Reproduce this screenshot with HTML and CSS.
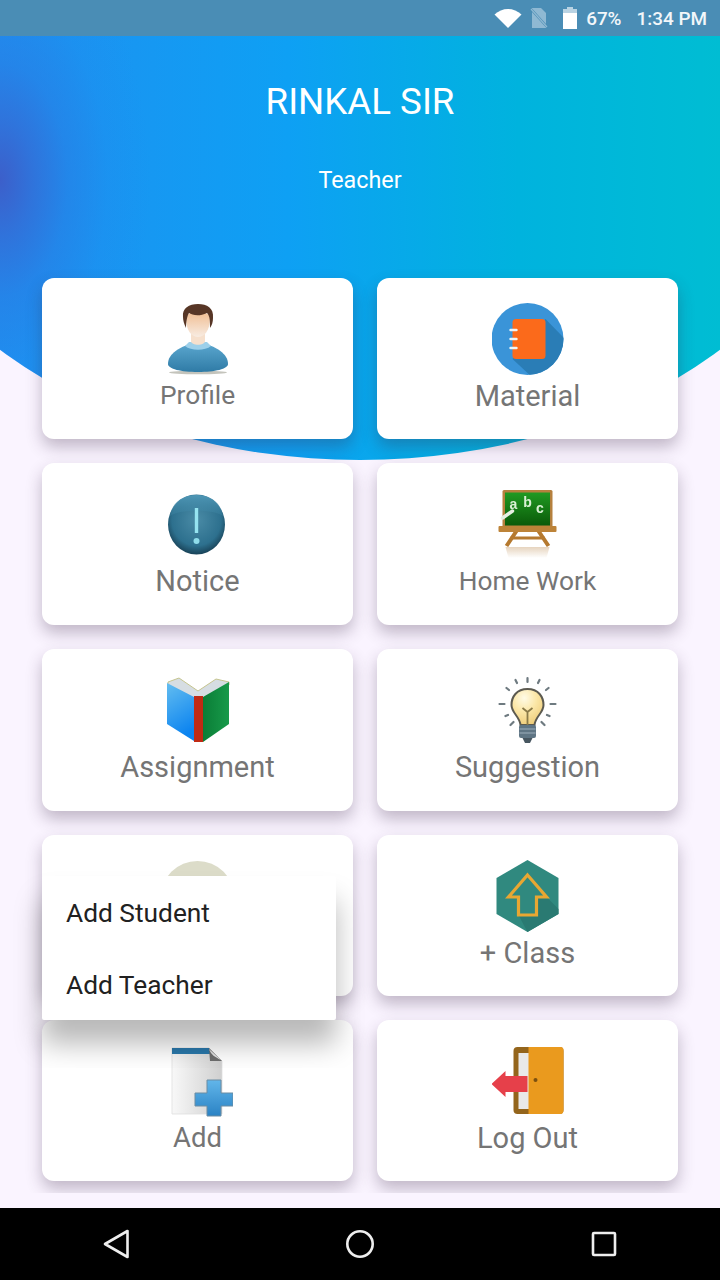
FILE: index.html
```html
<!DOCTYPE html>
<html lang="en">
<head>
<meta charset="utf-8">
<title>Teacher Dashboard</title>
<link rel="stylesheet" href="styles.css">
</head>
<body>
<div class="phone">
  <header class="status">
    <svg class="st-wifi" width="28" height="20" viewBox="0 0 28 20"><path d="M0.500 6.500C8-1 20-1 27.500 6.500L14 20Z" fill="#fff"/></svg>
    <svg class="st-sim" width="20" height="22" viewBox="0 0 20 22"><path d="M3 1h9l5 5v15H3z" fill="#8fb9d3"/><path d="M1 1l18 20" stroke="#4a8db5" stroke-width="2.500"/><path d="M2 2l16 18" stroke="#8fb9d3" stroke-width="1.200"/></svg>
    <svg class="st-bat" width="14" height="22" viewBox="0 0 14 22"><path d="M4 0h6v2h4v20H0V2h4z" fill="#b9d3e3"/><rect y="6" width="14" height="16" fill="#fff"/></svg>
    <span class="st-pct">67%</span>
    <span class="st-time">1:34 PM</span>
  </header>

  <main class="screen">
    <section class="hero">
      <h1 class="hero-name">RINKAL SIR</h1>
      <p class="hero-role">Teacher</p>
    </section>

    <div class="grid-clip">
      <div class="grid">
        <a class="card">
          <span class="icon-box">
            <svg width="62" height="72" viewBox="166 303 62 72">
              <defs>
                <linearGradient id="pf-skin" x1="0" y1="0" x2="0" y2="1"><stop offset="0" stop-color="#f0bd92"/><stop offset="1" stop-color="#f8ece2"/></linearGradient>
                <linearGradient id="pf-body" x1="0" y1="0" x2="0" y2="1"><stop offset="0" stop-color="#5aa6ce"/><stop offset="1" stop-color="#2f7ba6"/></linearGradient>
              </defs>
              <ellipse cx="197" cy="372.500" rx="29" ry="1.800" fill="#c4c4bc"/>
              <path d="M167 364C167 353 180 347 189 344L205 344C214 347 227 353 227 364C227 369 214 372 197 372S167 369 167 364Z" fill="url(#pf-body)"/>
              <path d="M184 346C190 351 204 351 210 346L206 342H188Z" fill="#9dd0ea"/>
              <path d="M190 328H204V341C204 346 190 346 190 341Z" fill="#f6e0cd"/>
              <path d="M185 318C185 310 209 310 209 318C209 331 203 337 197 337S185 331 185 318Z" fill="url(#pf-skin)"/>
              <path d="M182 317C181 308 188 304 197 304S213 308 212 318C212 322 211 325 209 328C209 321 209 316 206 313C198 317 191 315 188 313C186 316 185 322 185 328C183 324 182 320 182 317Z" fill="#573626"/>
            </svg>
          </span>
          <span class="label label-sm label-up">Profile</span>
        </a>
        <a class="card">
          <span class="icon-box">
            <svg width="72" height="72" viewBox="491.500 303 72 72">
              <defs><clipPath id="mt-clip"><circle cx="527" cy="339" r="36"/></clipPath></defs>
              <circle cx="527" cy="339" r="36" fill="#3a94d8"/>
              <path d="M545 319L575 350L540 385L512 359Z" fill="#2a7db6" clip-path="url(#mt-clip)"/>
              <rect x="512" y="319" width="33" height="40" rx="3.500" fill="#fb6a1b"/>
              <g stroke="#eef4f8" stroke-width="2.400" stroke-linecap="round"><path d="M510 330h6M510 339h6M510 348h6"/></g>
            </svg>
          </span>
          <span class="label">Material</span>
        </a>
        <a class="card">
          <span class="icon-box">
            <svg width="60" height="62" viewBox="168 493 60 62">
              <defs>
                <radialGradient id="nt-ball" cx=".5" cy=".42" r=".6"><stop offset="0" stop-color="#4a8ba6"/><stop offset=".72" stop-color="#2d708e"/><stop offset="1" stop-color="#163c50"/></radialGradient>
                <linearGradient id="nt-shine" x1="0" y1="0" x2="0" y2="1"><stop offset="0" stop-color="#4f97b6"/><stop offset="1" stop-color="#3b819f" stop-opacity=".4"/></linearGradient>
              </defs>
              <ellipse cx="196.500" cy="524.500" rx="28.500" ry="30" fill="url(#nt-ball)"/>
              <path d="M170 516C172 502 183 495 196.500 495S221 502 223 516C214 509 179 509 170 516Z" fill="url(#nt-shine)"/>
              <path d="M194.800 508h3.400v25h-3.400z" fill="#96e3f0"/>
              <circle cx="196.500" cy="541" r="3" fill="#8fdcea"/>
            </svg>
          </span>
          <span class="label">Notice</span>
        </a>
        <a class="card">
          <span class="icon-box">
            <svg width="60" height="70" viewBox="497.500 489 60 70">
              <defs><linearGradient id="hw-board" x1="0" y1="0" x2="0" y2="1"><stop offset="0" stop-color="#1f9a22"/><stop offset="1" stop-color="#0b5a09"/></linearGradient>
              <linearGradient id="hw-reflect" x1="0" y1="0" x2="0" y2="1"><stop offset="0" stop-color="#c8a070" stop-opacity=".45"/><stop offset="1" stop-color="#c8a070" stop-opacity="0"/></linearGradient></defs>
              <path d="M505 547H549L546 558H508Z" fill="url(#hw-reflect)"/>
              <g stroke="#b5792f" stroke-width="4"><path d="M516 531L506 546M538 531L548 546"/><path d="M510 538H544" stroke-width="3"/></g>
              <rect x="502" y="490" width="50" height="37" rx="1.500" fill="#b5803e"/>
              <rect x="504.500" y="492.500" width="45" height="33" fill="url(#hw-board)"/>
              <rect x="498" y="526" width="58" height="6" rx="1" fill="#bd8338"/>
              <path d="M502 518L512 511" stroke="#e6efe2" stroke-width="3.500" stroke-linecap="round"/>
              <text class="chalk" x="513" y="509">a</text><text class="chalk" x="527" y="507">b</text><text class="chalk" x="539.500" y="513">c</text>
            </svg>
          </span>
          <span class="label label-sm">Home Work</span>
        </a>
        <a class="card">
          <span class="icon-box">
            <svg width="64" height="66" viewBox="165 678 64 66">
              <defs><linearGradient id="as-blue" x1="0" y1="0" x2=".3" y2="1"><stop offset="0" stop-color="#63bdf0"/><stop offset="1" stop-color="#0c84f0"/></linearGradient>
              <linearGradient id="as-green" x1="0" y1="0" x2="1" y2="0"><stop offset="0" stop-color="#0a7d36"/><stop offset="1" stop-color="#189a4a"/></linearGradient></defs>
              <path d="M167 683L178 679L197 692L215 680L228 683V686L202 699H193L167 686Z" fill="#d6dde2" stroke="#c5c48e" stroke-width="1"/>
              <path d="M166 684L193 698V742L166 725Z" fill="url(#as-blue)"/>
              <path d="M193 697H202V743H193Z" fill="#c02a14"/>
              <path d="M202 698L228 683V725L202 743Z" fill="url(#as-green)"/>
            </svg>
          </span>
          <span class="label">Assignment</span>
        </a>
        <a class="card">
          <span class="icon-box">
            <svg width="60" height="68" viewBox="497.500 676 60 68">
              <defs><radialGradient id="sg-bulb" cx=".4" cy=".25" r=".75"><stop offset="0" stop-color="#fffbe6"/><stop offset=".5" stop-color="#fbe7a8"/><stop offset="1" stop-color="#efce7c"/></radialGradient></defs>
              <g stroke="#6e7a80" stroke-width="2.200" stroke-linecap="round"><path d="M527 678v4M515 680l1.500 3M539 680l-1.500 3M506 688l2.500 2M548 688l-2.500 2M499 704h5M550 704h5M505 716l2.500-1M549 716l-2.500-1M510 725l3-3M544 725l-3-3"/></g>
              <path d="M527 689C516 689 511 697 511 705C511 713 519 716 520 725H534C535 716 543 713 543 705C543 697 538 689 527 689Z" fill="url(#sg-bulb)" stroke="#5c5a50" stroke-width="2"/>
              <path d="M522 708L527 712L532 708M527 712V725" fill="none" stroke="#8a7a48" stroke-width="1.800"/>
              <rect x="518.500" y="725" width="17" height="13" rx="2" fill="#5f7584"/>
              <path d="M519 729h16M519 733h16" stroke="#9eb0bb" stroke-width="1.200"/>
              <path d="M522 738h10l-2.500 5h-5z" fill="#475660"/>
            </svg>
          </span>
          <span class="label">Suggestion</span>
        </a>
        <a class="card">
          <span class="icon-box">
            <svg width="75" height="72" viewBox="160 860 75 72"><circle cx="197.500" cy="898" r="37" fill="#dcdcc9"/></svg>
          </span>
        </a>
        <a class="card">
          <span class="icon-box">
            <svg width="64" height="74" viewBox="495.500 859 64 74">
              <path d="M527 860L558 878V914L527 932L496 914V878Z" fill="#30897f"/>
              <path d="M546 897L558 909V914L527 932L518 915H536V897Z" fill="#2a7a72"/>
              <path d="M527 875L546 897H536V915H518V897H508Z" fill="none" stroke="#e8a732" stroke-width="3.200"/>
            </svg>
          </span>
          <span class="label">+ Class</span>
        </a>
        <a class="card">
          <span class="icon-box">
            <svg width="71" height="72" viewBox="162 1046 71 72">
              <defs>
                <linearGradient id="ad-doc" x1="0" y1="0" x2="1" y2="0"><stop offset="0" stop-color="#f8f8f8"/><stop offset="1" stop-color="#cfcfcf"/></linearGradient>
                <linearGradient id="ad-plus" x1="0" y1="0" x2="0" y2="1"><stop offset="0" stop-color="#62b6ea"/><stop offset="1" stop-color="#2a82c4"/></linearGradient>
              </defs>
              <path d="M172 1049H209L222 1062V1115H172Z" fill="url(#ad-doc)" stroke="#dedede" stroke-width=".8"/>
              <path d="M172 1049H209L211 1055H172Z" fill="#2a78ab"/>
              <path d="M209 1049L222 1062H210Z" fill="#6e6e6e"/>
              <path d="M209 1050L221 1061C215 1058 211 1056 209 1050Z" fill="#e4e4e4"/>
              <path d="M207 1081H221V1094H233V1107H221V1117H207V1107H195V1094H207Z" fill="url(#ad-plus)" stroke="#6a8ca3" stroke-width="1"/>
            </svg>
          </span>
          <span class="label label-add">Add</span>
        </a>
        <a class="card">
          <span class="icon-box">
            <svg width="72" height="70" viewBox="491.500 1046 72 70">
              <rect x="513" y="1047" width="50" height="67" rx="4" fill="#94651c"/>
              <rect x="518" y="1053" width="12" height="56" fill="#e9e9e9"/>
              <path d="M528 1047H560Q563 1047 563 1050V1110Q563 1114 560 1114H528Z" fill="#ea9a1e"/>
              <circle cx="535" cy="1080" r="2" fill="#7b5010"/>
              <path d="M491 1084L505 1071V1076H527V1092H505V1097Z" fill="#e6404a"/>
            </svg>
          </span>
          <span class="label">Log Out</span>
        </a>
      </div>
    </div>

    <ul class="popup">
      <li class="popup-item">Add Student</li>
      <li class="popup-item">Add Teacher</li>
    </ul>
  </main>

  <nav class="navbar">
    <svg width="26" height="30" viewBox="0 0 26 30"><path d="M24.500 2V28L2 15Z" fill="none" stroke="#eee" stroke-width="2.600" stroke-linejoin="round"/></svg>
    <svg width="28" height="28" viewBox="0 0 28 28"><circle cx="14" cy="14" r="12.700" fill="none" stroke="#eee" stroke-width="2.600"/></svg>
    <svg width="26" height="26" viewBox="0 0 26 26"><rect x="2" y="2" width="22" height="22" rx="1" fill="none" stroke="#eee" stroke-width="2.600"/></svg>
  </nav>
</div>
</body>
</html>
```
FILE: styles.css
```css
* { box-sizing: border-box; }
html, body { margin: 0; padding: 0; }
body { font-family: Roboto, "Liberation Sans", sans-serif; background: #faf4ff; }

.phone { width: 720px; height: 1280px; display: flex; flex-direction: column; overflow: hidden; }

.status {
  height: 36px; flex: none; display: flex; align-items: center; justify-content: flex-end;
  padding-right: 13px; background: #4a8db5;
  font-size: 18.900px; font-weight: 500; color: #f2f7fa;
}
.st-wifi { margin-right: 7px; }
.st-sim { margin-right: 14px; }
.st-bat { margin-right: 9px; }
.st-pct { margin-right: 15px; }

.screen { flex: 1; position: relative; background: #faf4ff; min-height: 0; }

.hero {
  position: absolute; top: 0; left: 0; width: 720px; height: 424px;
  clip-path: ellipse(500px 360px at 360px 64px);
  background:
    radial-gradient(ellipse 150px 260px at 0 144px, rgb(60, 95, 202) 0%, rgba(52, 108, 214, .8) 22%, rgba(42, 122, 226, .5) 45%, rgba(34, 134, 236, .2) 72%, rgba(30, 144, 242, 0) 100%),
    linear-gradient(90deg, #1f8ff0 0%, #0ea0f4 40%, #00b3de 72%, #00bdd3 100%);
  display: flex; flex-direction: column; align-items: center; color: #fff; padding-top: 42px;
}
.hero-name { margin: 0; font-size: 36.700px; font-weight: 400; line-height: 48px; }
.hero-role { margin: 39px 0 0; font-size: 23.300px; line-height: 30px; }

.grid-clip { position: relative; height: 1157px; overflow: hidden; padding: 242px 0 0 42px; }
.grid {
  display: grid; gap: 24px;
  grid-template-columns: 311px 301px;
  grid-template-rows: 161px 162px 162px 161px 161px;
}
.card {
  background: #fff; border-radius: 12px; display: flex; flex-direction: column; align-items: center;
  padding-top: 25px; box-shadow: 0 8px 16px rgba(60, 40, 70, .3);
}
.icon-box { height: 72px; display: flex; align-items: center; justify-content: center; }
.icon-box svg { display: block; filter: blur(.4px); }
.label { font-size: 29px; line-height: 42px; color: #757575; }
.label-sm { font-size: 26.300px; }
.label-add { font-size: 27.500px; }
.label-up { margin-top: -1px; }
.chalk { font-family: "Liberation Sans", sans-serif; font-size: 14px; font-weight: 700; fill: #d8f0d4; text-anchor: middle; }

.popup {
  position: absolute; left: 42px; top: 840px; width: 294px; height: 144px; margin: 0; padding: 0;
  list-style: none; background: #fff; border-radius: 2px;
  box-shadow: 0 24px 28px rgba(0, 0, 0, .28);
  clip-path: inset(-30px -30px -48px -30px);
}
.popup-item { height: 72px; padding-left: 24px; font-size: 26.300px; line-height: 74px; color: #212121; }

.navbar {
  height: 72px; flex: none; background: #000; display: flex; align-items: center;
  justify-content: space-between; padding: 0 103px;
}
```
